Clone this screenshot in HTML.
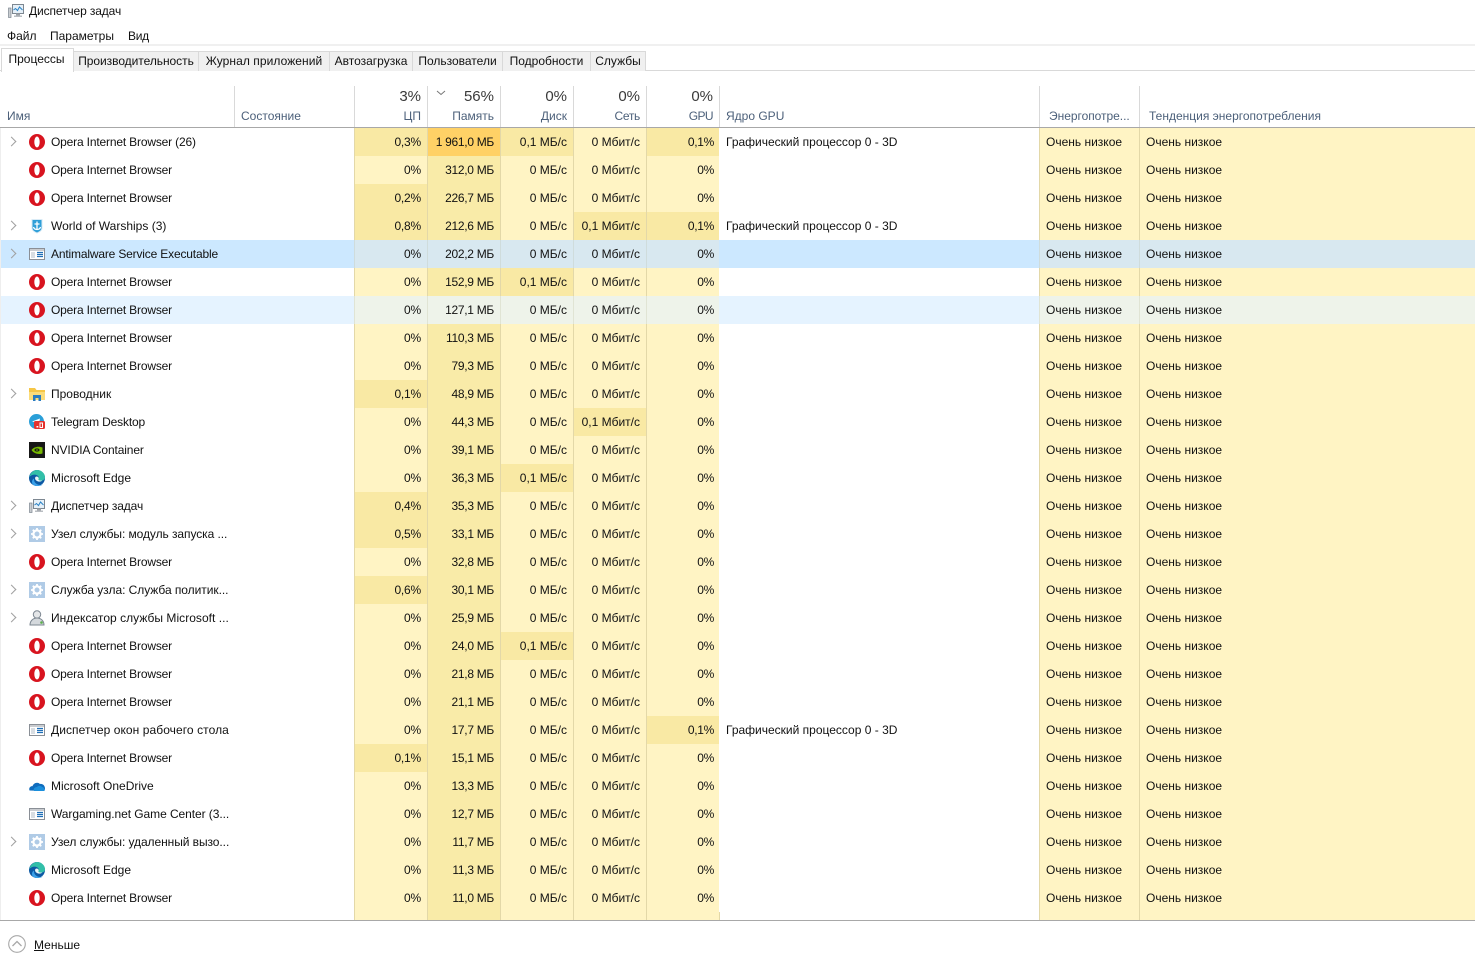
<!DOCTYPE html>
<html lang="ru"><head><meta charset="utf-8"><title>Диспетчер задач</title>
<style>
html,body{margin:0;padding:0;background:#fff;width:1475px;height:961px;overflow:hidden}
body{position:relative;font:12px "Liberation Sans","DejaVu Sans",sans-serif;color:#111}
.a{position:absolute;white-space:nowrap}
.tab{position:absolute;top:51px;height:19px;line-height:19px;background:#f0f0f0;border:1px solid #d9d9d9;border-bottom:0;box-sizing:content-box;text-align:center;font-size:12px}
.vl{position:absolute;top:86px;height:41px;width:1px;background:#d9d9d9}
.h1{position:absolute;top:88px;font-size:15px;color:#3a3a3a;text-align:right;width:66px}
.h2{position:absolute;top:109px;color:#4c607a;white-space:nowrap}
.hr{text-align:right;width:66px}
#rows{position:absolute;left:1px;top:128px;width:1474px}
.r{position:relative;height:28px;line-height:28px}
.r>*{position:absolute;top:0}
.r b{font-weight:400;left:50px;white-space:nowrap}
.r b.lt{letter-spacing:-.17px}
.r i{left:8px;top:10px;width:6px;height:6px;border-top:1.8px solid #a0a0a0;border-right:1.8px solid #a0a0a0;transform:rotate(45deg);display:block;margin-left:-1px;box-sizing:border-box;width:7px;height:7px}
.r svg{left:28px;top:6px;width:16px;height:16px}
.r s{text-decoration:none;height:28px;box-sizing:border-box;text-align:right;padding-right:6px;border-left:1px solid #e3d8a8;background:#fff4c4}
.c1{left:353px;width:73px;letter-spacing:-.2px}.c2{left:426px;width:73px;letter-spacing:-.3px}.c3{left:499px;width:73px}.c4{left:572px;width:73px}.c5{left:645px;width:73px;letter-spacing:-.3px}
.r s.c5{padding-right:5px}
.r s.m{background:#f9eba8}
.r s.d{background:#f9e9a4}
.r s.o{background:#ffd166}
.r u{text-decoration:none;left:725px;white-space:nowrap}
.r s.e1{left:1038px;width:100px;text-align:left;padding-left:6px}
.r s.e2{left:1138px;width:336px;text-align:left;padding-left:6px}
.sel{background:#cce8ff}
.sel s,.sel s.m,.sel s.e1,.sel s.e2{background:#d8e8f0;border-left-color:#cfdcdc}
.hov{background:#e5f3ff}
.hov s,.hov s.m,.hov s.e1,.hov s.e2{background:#eef3ea;border-left-color:#e0e4d4}
</style></head><body>
<svg width="0" height="0" style="position:absolute"><defs>
<symbol id="op" viewBox="0 0 16 16"><circle cx="8" cy="8" r="8" fill="#d8141f"/><ellipse cx="8" cy="8" rx="2.700" ry="5.500" fill="#fff"/></symbol>
<symbol id="ws" viewBox="0 0 16 16"><path d="M2.500 1h11v9c0 3-3 4.500-5.500 5.500C5.500 14.500 2.500 13 2.500 10z" fill="#d9ebf6"/><path d="M3.500 2h9v8c0 2.500-2.500 3.500-4.500 4.500C6 13.500 3.500 12.500 3.500 10z" fill="#2f9fd8"/><path d="M8 3.500v8M5.500 6h5M4.500 9c.5 2 2 2.500 3.500 2.500S11 11 11.500 9" stroke="#fff" stroke-width="1.300" fill="none"/></symbol>
<symbol id="win" viewBox="0 0 16 16"><rect x=".5" y="2.500" width="15" height="11" fill="#fff" stroke="#8a8f96"/><rect x="1" y="3" width="14" height="2" fill="#c9ccd0"/><rect x="2" y="6" width="4" height="6" fill="#d8dde2"/><path d="M8 6.500h6M8 8.500h6M8 10.500h6" stroke="#1f6fb8" stroke-width="1.200"/></symbol>
<symbol id="fo" viewBox="0 0 16 16"><path d="M0 2h6l1.500 2H16v10H0z" fill="#f6c646"/><path d="M0 6h16v8H0z" fill="#fbdc7a"/><path d="M4 15V9h8v6H9.500v-3h-3v3z" fill="#2a7cc0"/></symbol>
<symbol id="tg" viewBox="0 0 16 16"><circle cx="7.500" cy="7.500" r="7.500" fill="#2a9fd8"/><path d="M3 7.500l8-3-1.300 6.500-2.500-2-1.200 1.200-.3-2z" fill="#fff"/><rect x="5" y="7" width="11" height="8" rx="1.500" fill="#e5322d"/><rect x="7.500" y="12" width="1.800" height="1.500" fill="#fff"/><rect x="11" y="9" width="2.500" height="4.500" fill="none" stroke="#fff"/></symbol>
<symbol id="nv" viewBox="0 0 16 16"><rect width="16" height="16" fill="#171717"/><path d="M2.500 8C5 4.500 10 4 13.500 5.500v6C10 12.500 5 12 2.500 8z" fill="#76b900"/><ellipse cx="8" cy="8" rx="2.600" ry="1.600" fill="#171717"/><circle cx="8" cy="8" r=".8" fill="#76b900"/></symbol>
<symbol id="ed" viewBox="0 0 16 16"><circle cx="8" cy="8" r="8" fill="#0c59a4"/><path d="M.3 7C1.500 2.500 5 0 8 0c4 0 8 3 8 7.500 0 2-2 3-4 3-1.500 0-3-.5-3-1.500 1-1 1-2.500-.5-3.500C6 4 2.500 4.500.3 7z" fill="#32bfa8"/><path d="M5 8.500c-.5 3.500 2.500 6.500 6.500 6.500 1 0 2-.3 3-1-1.500 1.500-4 2-6.500 2-2 0-3.500-.8-4.500-2C2.500 12 3 9.500 5 8.500z" fill="#3aa0e8"/><path d="M7.500 6.500c1.800 0 2.800 1.800 1.800 3 .8 1 2.500 1.200 4 1-1 1-2.500 1.300-4 1-2-.4-3.500-2-3.200-3.700.2-.8.800-1.300 1.400-1.300z" fill="#e9f6f8"/></symbol>
<symbol id="tm" viewBox="0 0 16 16"><rect x="4.500" y="1.500" width="11" height="9" fill="#e6f0f8" stroke="#7d8791"/><path d="M5.500 7l2-1.500L9.500 7.500l2-3.500 3 3" fill="none" stroke="#2b83c6"/><rect x="8" y="10.500" width="4" height="2" fill="#9aa0a6"/><rect x="6" y="12.500" width="8" height="1.500" fill="#b9bdc2"/><rect x=".5" y="5" width="2.500" height="9.500" fill="#c9cdd1" stroke="#7d8791" stroke-width=".7"/></symbol>
<symbol id="ge" viewBox="0 0 16 16"><rect width="16" height="16" fill="#b0cbe6"/><circle cx="8" cy="8" r="3.600" fill="none" stroke="#fff" stroke-width="2.200"/><path d="M8 2v2.500M8 11.500V14M2 8h2.500M11.500 8H14M3.800 3.800l1.800 1.800M10.400 10.400l1.800 1.800M3.800 12.200l1.800-1.800M10.400 5.600l1.800-1.800" stroke="#fff" stroke-width="1.800"/></symbol>
<symbol id="ix" viewBox="0 0 16 16"><circle cx="8" cy="4.500" r="3.700" fill="#e4e6e8" stroke="#7d8791"/><path d="M1 15c0-4 3-7 7-7s7 3 7 7z" fill="#d4d8dc" stroke="#7d8791"/><circle cx="12.500" cy="12.500" r="1.300" fill="#5ab04a"/></symbol>
<symbol id="od" viewBox="0 0 16 16"><path d="M.5 12.500c-1-2.500 1-4.500 3-4.300C4.500 5 8.500 3.500 11 6c2.500-.5 5 1.500 5 4.500 0 1.300-.5 2-1 2.500z" fill="#0f6cbd"/><path d="M5 13c-1-2 .5-4 3-4 1-1.500 4-1.500 5 0 1.500 0 3 1.500 2.500 4z" fill="#1b8fdc"/></symbol>
</defs></svg>

<svg class="a" style="left:8px;top:3px;width:16px;height:16px"><use href="#tm"/></svg>
<div class="a" style="left:29px;top:4px;letter-spacing:-.12px">Диспетчер задач</div>
<div class="a" style="left:7px;top:29px">Файл</div>
<div class="a" style="left:50px;top:29px">Параметры</div>
<div class="a" style="left:128px;top:29px;letter-spacing:-.3px">Вид</div>
<div class="a" style="left:0;top:44px;width:1475px;height:2px;background:#f0f0f0"></div>
<div class="a" style="left:0;top:70px;width:1475px;height:1px;background:#d9d9d9"></div>
<div class="tab" style="left:1px;top:48px;width:71px;height:23px;line-height:21px;background:#fff;z-index:2;padding-right:2px;width:69px">Процессы</div>
<div class="tab" style="left:73px;width:124px;letter-spacing:-.05px">Производительность</div>
<div class="tab" style="left:198px;width:130px;letter-spacing:.07px">Журнал приложений</div>
<div class="tab" style="left:329px;width:82px">Автозагрузка</div>
<div class="tab" style="left:412px;width:89px">Пользователи</div>
<div class="tab" style="left:502px;width:87px">Подробности</div>
<div class="tab" style="left:590px;width:54px">Службы</div>

<div class="vl" style="left:234px"></div><div class="vl" style="left:354px"></div><div class="vl" style="left:427px"></div><div class="vl" style="left:500px"></div><div class="vl" style="left:573px"></div><div class="vl" style="left:646px"></div><div class="vl" style="left:719px"></div><div class="vl" style="left:1039px"></div><div class="vl" style="left:1139px"></div>
<div class="a" style="left:0;top:127px;width:1475px;height:1px;background:#a8a8a8"></div>
<div class="h2" style="left:7px">Имя</div>
<div class="h2" style="left:241px">Состояние</div>
<div class="h1" style="left:355px">3%</div><div class="h2 hr" style="left:355px">ЦП</div>
<svg class="a" style="left:436px;top:90px;width:10px;height:6px"><path d="M1 1l4 3.500L9 1" fill="none" stroke="#777"/></svg>
<div class="h1" style="left:428px">56%</div><div class="h2 hr" style="left:428px">Память</div>
<div class="h1" style="left:501px">0%</div><div class="h2 hr" style="left:501px">Диск</div>
<div class="h1" style="left:574px">0%</div><div class="h2 hr" style="left:574px;letter-spacing:-.3px">Сеть</div>
<div class="h1" style="left:647px">0%</div><div class="h2 hr" style="left:647px;letter-spacing:-.6px">GPU</div>
<div class="h2" style="left:726px">Ядро GPU</div>
<div class="h2" style="left:1049px;letter-spacing:-.03px">Энергопотре...</div>
<div class="h2" style="left:1149px">Тенденция энергопотребления</div>

<div id="rows">
<div class="r"><i></i><svg><use href="#op"/></svg><b class="lt">Opera Internet Browser (26)</b><s class="c1 d">0,3%</s><s class="c2 o">1 961,0 МБ</s><s class="c3 d">0,1 МБ/с</s><s class="c4">0 Мбит/с</s><s class="c5 d">0,1%</s><u>Графический процессор 0 - 3D</u><s class="e1">Очень низкое</s><s class="e2">Очень низкое</s></div>
<div class="r"><svg><use href="#op"/></svg><b class="lt">Opera Internet Browser</b><s class="c1">0%</s><s class="c2 m">312,0 МБ</s><s class="c3">0 МБ/с</s><s class="c4">0 Мбит/с</s><s class="c5">0%</s><s class="e1">Очень низкое</s><s class="e2">Очень низкое</s></div>
<div class="r"><svg><use href="#op"/></svg><b class="lt">Opera Internet Browser</b><s class="c1 d">0,2%</s><s class="c2 m">226,7 МБ</s><s class="c3">0 МБ/с</s><s class="c4">0 Мбит/с</s><s class="c5">0%</s><s class="e1">Очень низкое</s><s class="e2">Очень низкое</s></div>
<div class="r"><i></i><svg><use href="#ws"/></svg><b>World of Warships (3)</b><s class="c1 d">0,8%</s><s class="c2 m">212,6 МБ</s><s class="c3">0 МБ/с</s><s class="c4 d">0,1 Мбит/с</s><s class="c5 d">0,1%</s><u>Графический процессор 0 - 3D</u><s class="e1">Очень низкое</s><s class="e2">Очень низкое</s></div>
<div class="r sel"><i></i><svg><use href="#win"/></svg><b class="lt">Antimalware Service Executable</b><s class="c1">0%</s><s class="c2 m">202,2 МБ</s><s class="c3">0 МБ/с</s><s class="c4">0 Мбит/с</s><s class="c5">0%</s><s class="e1">Очень низкое</s><s class="e2">Очень низкое</s></div>
<div class="r"><svg><use href="#op"/></svg><b class="lt">Opera Internet Browser</b><s class="c1">0%</s><s class="c2 m">152,9 МБ</s><s class="c3 d">0,1 МБ/с</s><s class="c4">0 Мбит/с</s><s class="c5">0%</s><s class="e1">Очень низкое</s><s class="e2">Очень низкое</s></div>
<div class="r hov"><svg><use href="#op"/></svg><b class="lt">Opera Internet Browser</b><s class="c1">0%</s><s class="c2 m">127,1 МБ</s><s class="c3">0 МБ/с</s><s class="c4">0 Мбит/с</s><s class="c5">0%</s><s class="e1">Очень низкое</s><s class="e2">Очень низкое</s></div>
<div class="r"><svg><use href="#op"/></svg><b class="lt">Opera Internet Browser</b><s class="c1">0%</s><s class="c2 m">110,3 МБ</s><s class="c3">0 МБ/с</s><s class="c4">0 Мбит/с</s><s class="c5">0%</s><s class="e1">Очень низкое</s><s class="e2">Очень низкое</s></div>
<div class="r"><svg><use href="#op"/></svg><b class="lt">Opera Internet Browser</b><s class="c1">0%</s><s class="c2 m">79,3 МБ</s><s class="c3">0 МБ/с</s><s class="c4">0 Мбит/с</s><s class="c5">0%</s><s class="e1">Очень низкое</s><s class="e2">Очень низкое</s></div>
<div class="r"><i></i><svg><use href="#fo"/></svg><b>Проводник</b><s class="c1 d">0,1%</s><s class="c2 m">48,9 МБ</s><s class="c3">0 МБ/с</s><s class="c4">0 Мбит/с</s><s class="c5">0%</s><s class="e1">Очень низкое</s><s class="e2">Очень низкое</s></div>
<div class="r"><svg><use href="#tg"/></svg><b class="lt">Telegram Desktop</b><s class="c1">0%</s><s class="c2 m">44,3 МБ</s><s class="c3">0 МБ/с</s><s class="c4 d">0,1 Мбит/с</s><s class="c5">0%</s><s class="e1">Очень низкое</s><s class="e2">Очень низкое</s></div>
<div class="r"><svg><use href="#nv"/></svg><b style="letter-spacing:-.12px">NVIDIA Container</b><s class="c1">0%</s><s class="c2 m">39,1 МБ</s><s class="c3">0 МБ/с</s><s class="c4">0 Мбит/с</s><s class="c5">0%</s><s class="e1">Очень низкое</s><s class="e2">Очень низкое</s></div>
<div class="r"><svg><use href="#ed"/></svg><b>Microsoft Edge</b><s class="c1">0%</s><s class="c2 m">36,3 МБ</s><s class="c3 d">0,1 МБ/с</s><s class="c4">0 Мбит/с</s><s class="c5">0%</s><s class="e1">Очень низкое</s><s class="e2">Очень низкое</s></div>
<div class="r"><i></i><svg><use href="#tm"/></svg><b style="letter-spacing:-.12px">Диспетчер задач</b><s class="c1 d">0,4%</s><s class="c2 m">35,3 МБ</s><s class="c3">0 МБ/с</s><s class="c4">0 Мбит/с</s><s class="c5">0%</s><s class="e1">Очень низкое</s><s class="e2">Очень низкое</s></div>
<div class="r"><i></i><svg><use href="#ge"/></svg><b style="letter-spacing:-.07px">Узел службы: модуль запуска ...</b><s class="c1 d">0,5%</s><s class="c2 m">33,1 МБ</s><s class="c3">0 МБ/с</s><s class="c4">0 Мбит/с</s><s class="c5">0%</s><s class="e1">Очень низкое</s><s class="e2">Очень низкое</s></div>
<div class="r"><svg><use href="#op"/></svg><b class="lt">Opera Internet Browser</b><s class="c1">0%</s><s class="c2 m">32,8 МБ</s><s class="c3">0 МБ/с</s><s class="c4">0 Мбит/с</s><s class="c5">0%</s><s class="e1">Очень низкое</s><s class="e2">Очень низкое</s></div>
<div class="r"><i></i><svg><use href="#ge"/></svg><b style="letter-spacing:-.05px">Служба узла: Служба политик...</b><s class="c1 d">0,6%</s><s class="c2 m">30,1 МБ</s><s class="c3">0 МБ/с</s><s class="c4">0 Мбит/с</s><s class="c5">0%</s><s class="e1">Очень низкое</s><s class="e2">Очень низкое</s></div>
<div class="r"><i></i><svg><use href="#ix"/></svg><b style="letter-spacing:.03px">Индексатор службы Microsoft ...</b><s class="c1">0%</s><s class="c2 m">25,9 МБ</s><s class="c3">0 МБ/с</s><s class="c4">0 Мбит/с</s><s class="c5">0%</s><s class="e1">Очень низкое</s><s class="e2">Очень низкое</s></div>
<div class="r"><svg><use href="#op"/></svg><b class="lt">Opera Internet Browser</b><s class="c1">0%</s><s class="c2 m">24,0 МБ</s><s class="c3 d">0,1 МБ/с</s><s class="c4">0 Мбит/с</s><s class="c5">0%</s><s class="e1">Очень низкое</s><s class="e2">Очень низкое</s></div>
<div class="r"><svg><use href="#op"/></svg><b class="lt">Opera Internet Browser</b><s class="c1">0%</s><s class="c2 m">21,8 МБ</s><s class="c3">0 МБ/с</s><s class="c4">0 Мбит/с</s><s class="c5">0%</s><s class="e1">Очень низкое</s><s class="e2">Очень низкое</s></div>
<div class="r"><svg><use href="#op"/></svg><b class="lt">Opera Internet Browser</b><s class="c1">0%</s><s class="c2 m">21,1 МБ</s><s class="c3">0 МБ/с</s><s class="c4">0 Мбит/с</s><s class="c5">0%</s><s class="e1">Очень низкое</s><s class="e2">Очень низкое</s></div>
<div class="r"><svg><use href="#win"/></svg><b style="letter-spacing:.07px">Диспетчер окон рабочего стола</b><s class="c1">0%</s><s class="c2 m">17,7 МБ</s><s class="c3">0 МБ/с</s><s class="c4">0 Мбит/с</s><s class="c5 d">0,1%</s><u>Графический процессор 0 - 3D</u><s class="e1">Очень низкое</s><s class="e2">Очень низкое</s></div>
<div class="r"><svg><use href="#op"/></svg><b class="lt">Opera Internet Browser</b><s class="c1 d">0,1%</s><s class="c2 m">15,1 МБ</s><s class="c3">0 МБ/с</s><s class="c4">0 Мбит/с</s><s class="c5">0%</s><s class="e1">Очень низкое</s><s class="e2">Очень низкое</s></div>
<div class="r"><svg><use href="#od"/></svg><b>Microsoft OneDrive</b><s class="c1">0%</s><s class="c2 m">13,3 МБ</s><s class="c3">0 МБ/с</s><s class="c4">0 Мбит/с</s><s class="c5">0%</s><s class="e1">Очень низкое</s><s class="e2">Очень низкое</s></div>
<div class="r"><svg><use href="#win"/></svg><b style="letter-spacing:-.07px">Wargaming.net Game Center (3...</b><s class="c1">0%</s><s class="c2 m">12,7 МБ</s><s class="c3">0 МБ/с</s><s class="c4">0 Мбит/с</s><s class="c5">0%</s><s class="e1">Очень низкое</s><s class="e2">Очень низкое</s></div>
<div class="r"><i></i><svg><use href="#ge"/></svg><b style="letter-spacing:-.07px">Узел службы: удаленный вызо...</b><s class="c1">0%</s><s class="c2 m">11,7 МБ</s><s class="c3">0 МБ/с</s><s class="c4">0 Мбит/с</s><s class="c5">0%</s><s class="e1">Очень низкое</s><s class="e2">Очень низкое</s></div>
<div class="r"><svg><use href="#ed"/></svg><b>Microsoft Edge</b><s class="c1">0%</s><s class="c2 m">11,3 МБ</s><s class="c3">0 МБ/с</s><s class="c4">0 Мбит/с</s><s class="c5">0%</s><s class="e1">Очень низкое</s><s class="e2">Очень низкое</s></div>
<div class="r"><svg><use href="#op"/></svg><b class="lt">Opera Internet Browser</b><s class="c1">0%</s><s class="c2 m">11,0 МБ</s><s class="c3">0 МБ/с</s><s class="c4">0 Мбит/с</s><s class="c5">0%</s><s class="e1">Очень низкое</s><s class="e2">Очень низкое</s></div>
</div>
<div class="a" style="left:354px;top:912px;width:366px;height:8px;background:#fff4c4"></div>
<div class="a" style="left:1039px;top:912px;width:436px;height:8px;background:#fff4c4"></div>
<div class="a" style="left:427px;top:912px;width:73px;height:8px;background:#f9eba8"></div>
<div class="a" style="left:354px;top:912px;width:1px;height:8px;background:#e3d8a8"></div>
<div class="a" style="left:427px;top:912px;width:1px;height:8px;background:#e3d8a8"></div>
<div class="a" style="left:500px;top:912px;width:1px;height:8px;background:#e3d8a8"></div>
<div class="a" style="left:573px;top:912px;width:1px;height:8px;background:#e3d8a8"></div>
<div class="a" style="left:646px;top:912px;width:1px;height:8px;background:#e3d8a8"></div>
<div class="a" style="left:719px;top:912px;width:1px;height:8px;background:#e3d8a8"></div>
<div class="a" style="left:1039px;top:912px;width:1px;height:8px;background:#e3d8a8"></div>
<div class="a" style="left:1139px;top:912px;width:1px;height:8px;background:#e3d8a8"></div>
<div class="a" style="left:0;top:920px;width:1475px;height:1px;background:#a8a8a8"></div>
<div class="a" style="left:0;top:128px;width:1px;height:792px;background:#eee"></div>
<svg class="a" style="left:8px;top:935px;width:20px;height:20px"><circle cx="9" cy="9" r="8.300" fill="none" stroke="#a8a8a8" stroke-width="1.100"/><path d="M4.500 11L9 6.500l4.500 4.500" fill="none" stroke="#a8a8a8" stroke-width="1.300"/></svg>
<div class="a" style="left:34px;top:938px"><span style="text-decoration:underline">М</span>еньше</div>
</body></html>
